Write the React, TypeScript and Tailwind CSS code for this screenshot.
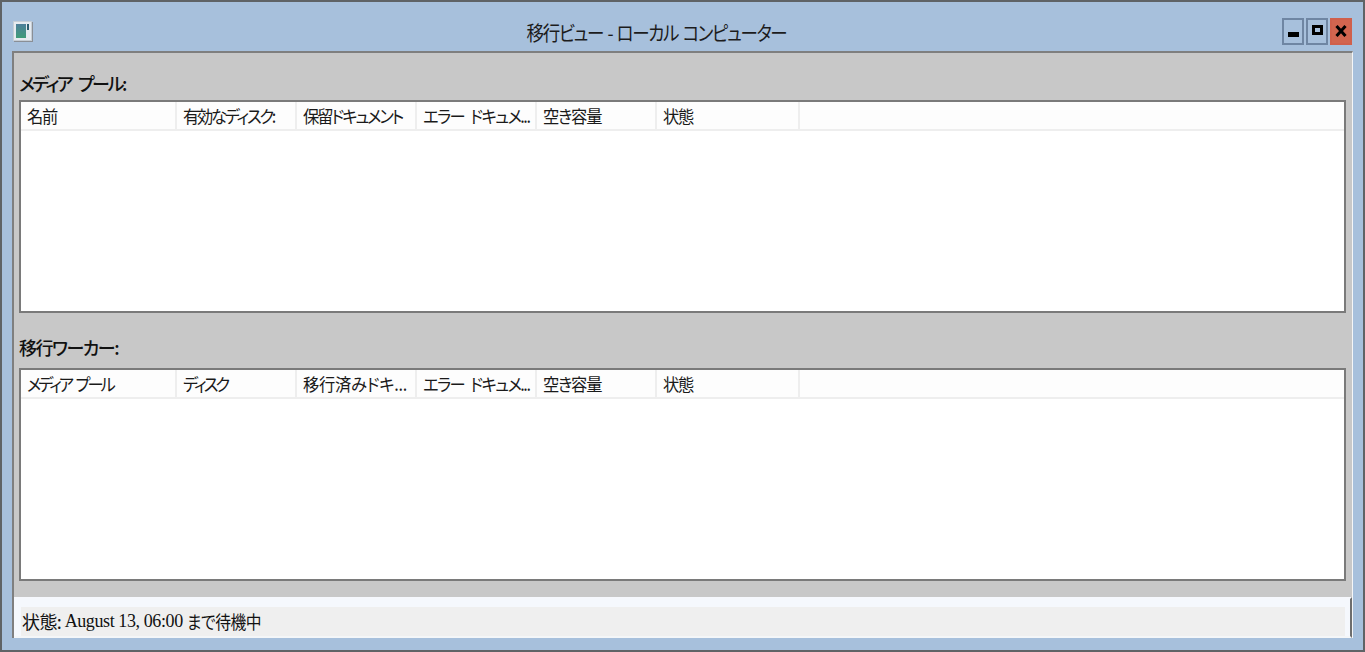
const sans = "font-['Noto_Sans_CJK_JP','Noto_Sans_CJK_SC',sans-serif]";

type Column = { label: string; tracking: string };

const poolColumns: Column[] = [
  { label: "名前", tracking: "tracking-[-1.3px]" },
  { label: "有効なディスク:", tracking: "tracking-[-2.4px]" },
  { label: "保留ドキュメント", tracking: "tracking-[-2.2px]" },
  { label: "エラー ドキュメ...", tracking: "tracking-[-1.6px]" },
  { label: "空き容量", tracking: "tracking-[-1.3px]" },
  { label: "状態", tracking: "tracking-[-1.3px]" },
];
const workerColumns: Column[] = [
  { label: "メディア プール", tracking: "tracking-[-3.2px]" },
  { label: "ディスク", tracking: "tracking-[-3.2px]" },
  { label: "移行済みドキ...", tracking: "tracking-[-0.3px]" },
  { label: "エラー ドキュメ...", tracking: "tracking-[-1.6px]" },
  { label: "空き容量", tracking: "tracking-[-1.3px]" },
  { label: "状態", tracking: "tracking-[-1.3px]" },
];
const widths = ["w-[156px]", "w-[120px]", "w-[120px]", "w-[120px]", "w-[120px]", "w-[143px]"];

function ListTable({ columns }: { columns: Column[] }) {
  return (
    <div className="h-[213px] border-2 border-[#7a7a7a] bg-white">
      <div className="flex h-[29px] border-b-2 border-[#eeeeee] bg-[#fdfdfd]">
        {columns.map((c, i) => (
          <div
            key={c.label}
            className={`${widths[i]} flex items-center overflow-hidden whitespace-nowrap border-r-2 border-[#eeeeee] pl-[6px] pt-px text-[17.5px] text-[#1a1a1a] [font-feature-settings:'palt']`}
          >
            <span className={`${c.tracking} origin-left scale-x-[0.93] [word-spacing:4px]`}>{c.label}</span>
          </div>
        ))}
      </div>
    </div>
  );
}

function WindowButton({ className, children }: { className: string; children: React.ReactNode }) {
  return (
    <div className={`flex h-[27px] w-[22px] items-center justify-center border-2 ${className}`}>
      {children}
    </div>
  );
}

export default function App() {
  return (
    <div className={`${sans} flex h-[652px] w-[1365px] flex-col overflow-hidden border-x-2 border-t-2 border-b-2 border-[#5f6366] bg-[#a7c0dc] text-black`}>
      {/* title bar */}
      <div className="relative flex h-[49px] shrink-0 items-center justify-center pt-[12px] pr-[52px]">
        <div className="absolute left-[11px] top-[19px] flex h-[20px] w-[19px] border border-[#c6ced6] bg-[#e6ebf0] p-[2px] shadow-[1px_1px_0_#8a8f96]">
          <div className="h-full w-[11px] bg-gradient-to-b from-[#4d7f9a] to-[#3f9c78]" />
          <div className="ml-[1px] h-[6px] w-[2px] bg-[#2d5f70]" />
        </div>
        <span className="scale-x-[0.875] text-[20px] tracking-[-1.5px] text-[#1c1c1c] [font-feature-settings:'palt'] [word-spacing:2px]">移行ビュー - ローカル コンピューター</span>
        <div className="absolute right-[11px] top-[16px] flex gap-[2px]">
          <WindowButton className="border-[#6f86a3] bg-[#a7c0dc]">
            <div className="mt-[6px] h-[5px] w-[11px] bg-black" />
          </WindowButton>
          <WindowButton className="border-[#6f86a3] bg-[#a7c0dc]">
            <div className="mb-[3px] h-[10px] w-[11px] border-[3px] border-black" />
          </WindowButton>
          <WindowButton className="border-[#d0604c] bg-[#d2654f]">
            <svg width="12" height="12" viewBox="0 0 12 12" className="mb-[2px]">
              <path d="M1.5 1 L10.5 11 M10.5 1 L1.5 11" stroke="#000" strokeWidth="3" />
            </svg>
          </WindowButton>
        </div>
      </div>

      {/* client area */}
      <div className="mx-[10px] flex flex-1 flex-col border-t-2 border-l-2 border-r border-[#7f7f7f] border-r-[#f4f6f8] bg-[#c8c8c8]">
        <div className="flex flex-1 flex-col pl-[5px] pr-[6px]">
          <div className="flex h-[47px] items-end pb-[4px] text-[18px] font-medium leading-[26px] tracking-[-2.4px] text-[#111] [font-feature-settings:'palt'] [word-spacing:5px]">
            メディア プール:
          </div>
          <ListTable columns={poolColumns} />
          <div className="flex h-[55px] items-end pb-[8px] text-[18px] font-medium leading-[26px] tracking-[-1.5px] text-[#111] [font-feature-settings:'palt']">
            移行ワーカー:
          </div>
          <ListTable columns={workerColumns} />
        </div>

        {/* status bar */}
        <div className="flex h-[41px] shrink-0 flex-col border-t-2 border-r-2 border-b-2 border-t-[#f6f8fd] border-r-[#6e6e6e] border-b-[#f4f6f8] bg-[#f5f8fd] pt-[8px]">
          <div className="ml-[7px] mr-[5px] flex flex-1 items-center bg-[#efefef] pl-[1px] text-[18px] text-[#111] [font-feature-settings:'palt']">
            <span className="tracking-[-0.6px]">状態:&nbsp;</span>
            <span className="font-['Liberation_Serif',serif] tracking-[-0.4px]">August 13, 06:00</span>
            <span className="ml-[4px] origin-left scale-x-[0.875] tracking-[-0.5px]">まで待機中</span>
          </div>
        </div>
      </div>
      <div className="h-[12px] shrink-0" />
    </div>
  );
}
